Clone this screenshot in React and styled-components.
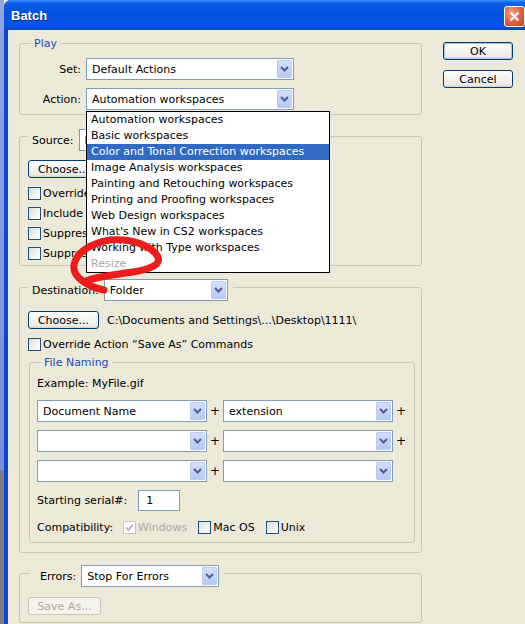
import React from "react";
import styled, { createGlobalStyle } from "styled-components";

const GlobalStyle = createGlobalStyle`
  html, body {
    margin: 0;
    padding: 0;
    background: #ece9d8;
  }
  body {
    font-family: "DejaVu Sans", Tahoma, sans-serif;
    font-size: 11px;
    color: #000;
  }
`;

const Screen = styled.div`
  position: relative;
  width: 525px;
  height: 624px;
  overflow: hidden;
  display: flex;
`;

const Desktop = styled.div`
  flex: none;
  width: 4px;
  background: linear-gradient(to bottom, #95a4da 0, #7d8ed9 470px, #7b7b7b 470px);
`;

const Window = styled.div`
  flex: 1;
  display: flex;
  flex-direction: column;
  background: linear-gradient(to right, #0d45d4, #1d5ff0);
  border-top-left-radius: 7px;
  overflow: hidden;
`;

const TitleBar = styled.div`
  flex: none;
  height: 30px;
  display: flex;
  align-items: flex-start;
  padding-left: 7px;
  background: linear-gradient(
    to bottom,
    #3d95ff 0%,
    #0a5ee9 10%,
    #0252e0 45%,
    #0756e3 85%,
    #0a45cc 100%
  );
`;

const Title = styled.span`
  margin-top: 8px;
  color: #fff;
  font: bold 13px "Liberation Sans", Arial, sans-serif;
  text-shadow: 1px 1px 0 #0b2f9e;
`;

const CloseButton = styled.span`
  margin: 6px 0 0 auto;
  width: 21px;
  height: 21px;
  box-sizing: border-box;
  border: 1px solid #fff;
  border-radius: 3px;
  background: radial-gradient(circle at 35% 30%, #f0a080 0%, #e06a45 45%, #c23f1c 100%);
  display: flex;
  align-items: center;
  justify-content: center;
`;

const Body = styled.div`
  flex: 1;
  display: flex;
  margin-left: 4px;
  padding: 7px 0 0 11px;
  background: #ece9d8;
`;

const Main = styled.div`
  flex: none;
  width: 403px;
  display: flex;
  flex-direction: column;
`;

const Side = styled.div`
  display: flex;
  flex-direction: column;
  gap: 10px;
  margin-left: 21px;
  padding-top: 5px;
`;

const Group = styled.fieldset`
  margin: ${({ $mt = 0 }) => $mt}px 0 0 ${({ $ml = 0 }) => $ml}px;
  padding: ${({ $pad }) => $pad};
  border: 1px solid #c9c6b4;
  border-radius: 3px;
  min-width: 0;
  display: flex;
  flex-direction: column;
`;

const Caption = styled.legend`
  margin-left: ${({ $ml = 0 }) => $ml}px;
  padding: ${({ $pt = 0 }) => $pt}px ${({ $pr = 3 }) => $pr}px 0
    ${({ $pl = 3 }) => $pl}px;
  display: flex;
  align-items: center;
  gap: 5px;
  line-height: 13px;
  color: ${({ $blue }) => ($blue ? "#1a4bc4" : "#000")};
`;

const FormGrid = styled.div`
  display: grid;
  grid-template-columns: 61px auto;
  column-gap: 5px;
  row-gap: 8px;
  align-items: center;
`;

const RightLabel = styled.span`
  text-align: right;
`;

const ComboBox = styled.div`
  position: relative;
  flex: none;
  box-sizing: border-box;
  width: ${({ $w }) => $w}px;
  height: 22px;
  border: 1px solid #7f9db9;
  background: #fff;
  display: flex;
  align-items: center;
  padding-left: 5px;
  color: #000;
`;

const ComboText = styled.span`
  flex: 1;
  white-space: nowrap;
  overflow: hidden;
`;

const ComboArrow = styled.span`
  flex: none;
  width: 15px;
  height: 18px;
  margin: 1px;
  box-sizing: border-box;
  border: 1px solid #bccdf4;
  border-radius: 1px;
  background: linear-gradient(to bottom, #d3defb, #b6c8f6);
  display: flex;
  align-items: center;
  justify-content: center;
`;

const DropList = styled.div`
  position: absolute;
  top: calc(100% + 2px);
  left: -1px;
  z-index: 10;
  width: 244px;
  box-sizing: border-box;
  border: 1px solid #000;
  background: #fff;
`;

const DropItem = styled.div`
  height: 16px;
  line-height: 16px;
  padding-left: 4px;
  white-space: nowrap;
  background: ${({ $active }) => ($active ? "#316ac5" : "transparent")};
  color: ${({ $active, $disabled }) =>
    $active ? "#fff" : $disabled ? "#a7a7a7" : "#000"};
`;

const Button = styled.button`
  flex: none;
  box-sizing: border-box;
  width: ${({ $w = 71 }) => $w}px;
  height: 18px;
  padding: 0;
  font: inherit;
  color: ${({ disabled }) => (disabled ? "#aca899" : "#000")};
  border: 1px solid ${({ disabled }) => (disabled ? "#c9c7ba" : "#003c74")};
  border-radius: 3px;
  background: ${({ disabled }) =>
    disabled
      ? "#f5f4ea"
      : "linear-gradient(to bottom, #fff 0%, #f5f4ef 45%, #ecebe6 85%, #d6d0c5 100%)"};
  box-shadow: ${({ $default }) => ($default ? "inset 0 0 0 1px #a8c2ef" : "none")};
`;

const Row = styled.div`
  display: flex;
  align-items: center;
  gap: ${({ $gap = 0 }) => $gap}px;
  margin-top: ${({ $mt = 0 }) => $mt}px;
`;

const CheckList = styled.div`
  display: flex;
  flex-direction: column;
  gap: 7px;
  margin-top: 9px;
`;

const Check = styled.label`
  display: flex;
  align-items: center;
  gap: 2px;
  height: 13px;
  white-space: nowrap;
  margin-right: ${({ $mr = 0 }) => $mr}px;
  color: ${({ $disabled }) => ($disabled ? "#aca899" : "#000")};
`;

const Box = styled.span`
  flex: none;
  width: 13px;
  height: 13px;
  box-sizing: border-box;
  border: 1px solid ${({ $disabled }) => ($disabled ? "#cac8bb" : "#1c5180")};
  background: ${({ $disabled }) =>
    $disabled ? "#fff" : "linear-gradient(135deg, #dcdcd5 0%, #f4f4f0 60%, #fff 100%)"};
  display: flex;
  align-items: center;
  justify-content: center;
`;

const Plus = styled.span`
  flex: none;
  width: 16px;
  text-align: center;
  font-size: 12px;
`;

const Field = styled.input`
  box-sizing: border-box;
  width: 42px;
  height: 21px;
  border: 1px solid #7f9db9;
  padding: 0 0 0 7px;
  font: inherit;
  color: #000;
  background: #fff;
  outline: none;
`;

const Annotation = styled.svg`
  position: absolute;
  left: 0;
  top: 0;
  z-index: 20;
  pointer-events: none;
`;

const actions = [
  "Automation workspaces",
  "Basic workspaces",
  "Color and Tonal Correction workspaces",
  "Image Analysis workspaces",
  "Painting and Retouching workspaces",
  "Printing and Proofing workspaces",
  "Web Design workspaces",
  "What's New in CS2 workspaces",
  "Working with Type workspaces",
];

function Combo({ w, value, children }) {
  return (
    <ComboBox $w={w}>
      <ComboText>{value}</ComboText>
      <ComboArrow>
        <svg width="9" height="6" viewBox="0 0 9 6">
          <path d="M1 1 L4.5 4.5 L8 1" fill="none" stroke="#4d5f8c" strokeWidth="2" />
        </svg>
      </ComboArrow>
      {children}
    </ComboBox>
  );
}

function CheckBox({ label, checked, disabled, mr }) {
  return (
    <Check $disabled={disabled} $mr={mr}>
      <Box $disabled={disabled}>
        {checked && (
          <svg width="9" height="9" viewBox="0 0 9 9">
            <path
              d="M1 4.5 L3.5 7 L8 1.5"
              fill="none"
              stroke={disabled ? "#b5b2a5" : "#21a121"}
              strokeWidth="1.8"
            />
          </svg>
        )}
      </Box>
      {label}
    </Check>
  );
}

function NamingRow({ left = "", right = "", last }) {
  return (
    <Row>
      <Combo w={170} value={left} />
      <Plus>+</Plus>
      <Combo w={170} value={right} />
      {!last && <Plus>+</Plus>}
    </Row>
  );
}

export default function App() {
  return (
    <Screen>
      <GlobalStyle />
      <Desktop />
      <Window>
        <TitleBar>
          <Title>Batch</Title>
          <CloseButton>
            <svg width="11" height="11" viewBox="0 0 11 11">
              <path d="M1.5 1.5 L9.5 9.5 M9.5 1.5 L1.5 9.5" stroke="#fff" strokeWidth="2.2" />
            </svg>
          </CloseButton>
        </TitleBar>
        <Body>
          <Main>
            <Group $pad="8px 0 4px 0">
              <Caption $ml={11} $blue>Play</Caption>
              <FormGrid>
                <RightLabel>Set:</RightLabel>
                <Combo w={208} value="Default Actions" />
                <RightLabel>Action:</RightLabel>
                <Combo w={208} value="Automation workspaces">
                  <DropList>
                    {actions.map((a, i) => (
                      <DropItem key={a} $active={i === 2}>
                        {a}
                      </DropItem>
                    ))}
                    <DropItem $disabled>Resize</DropItem>
                  </DropList>
                </Combo>
              </FormGrid>
            </Group>

            <Group $mt={6} $pad="9px 0 5px 8px">
              <Caption $pt={8} $pl={4} $pr={5}>
                Source:
                <Combo w={124} value="Folder" />
              </Caption>
              <Row>
                <Button>Choose...</Button>
              </Row>
              <CheckList>
                <CheckBox label="Override Action “Open” Commands" />
                <CheckBox label="Include All Subfolders" />
                <CheckBox label="Suppress File Open Options Dialogs" />
                <CheckBox label="Suppress Color Profile Warnings" />
              </CheckList>
            </Group>

            <Group $mt={7} $pad="10px 6px 9px 8px">
              <Caption $pt={6} $pl={4} $pr={5}>
                Destination:
                <Combo w={124} value="Folder" />
              </Caption>
              <Row $gap={8}>
                <Button>Choose...</Button>
                <span>{"C:\\Documents and Settings\\...\\Desktop\\1111\\"}</span>
              </Row>
              <Row $mt={9}>
                <CheckBox label="Override Action “Save As” Commands" />
              </Row>
              <Group $mt={5} $ml={1} $pad="8px 0 8px 7px">
                <Caption $ml={4} $blue>File Naming</Caption>
                <span>Example: MyFile.gif</span>
                <Row $mt={10}>
                  <NamingRow left="Document Name" right="extension" />
                </Row>
                <Row $mt={8}>
                  <NamingRow />
                </Row>
                <Row $mt={8}>
                  <NamingRow last />
                </Row>
                <Row $mt={8} $gap={11}>
                  <span>Starting serial#:</span>
                  <Field defaultValue="1" readOnly />
                </Row>
                <Row $mt={10}>
                  <span style={{ marginRight: 10 }}>Compatibility:</span>
                  <CheckBox label="Windows" checked disabled mr={11} />
                  <CheckBox label="Mac OS" mr={11} />
                  <CheckBox label="Unix" />
                </Row>
              </Group>
            </Group>

            <Group $mt={6} $pad="10px 0 7px 8px">
              <Caption $pt={6} $ml={2} $pl={10} $pr={5}>
                Errors:
                <Combo w={138} value="Stop For Errors" />
              </Caption>
              <Row>
                <Button $w={73} disabled>
                  Save As...
                </Button>
              </Row>
            </Group>
          </Main>
          <Side>
            <Button $w={70} $default>
              OK
            </Button>
            <Button $w={70}>Cancel</Button>
          </Side>
        </Body>
      </Window>
      <Annotation width="525" height="624" viewBox="0 0 525 624">
        <path
          d="M104 290 C88 287 72 277 74 265 C76 252 92 243 110 240 C132 238 152 246 158 257 C162 267 142 271 125 273 C108 276 96 277 86 281"
          fill="none"
          stroke="#ea1c1c"
          strokeWidth="7"
          strokeLinecap="round"
        />
      </Annotation>
    </Screen>
  );
}
